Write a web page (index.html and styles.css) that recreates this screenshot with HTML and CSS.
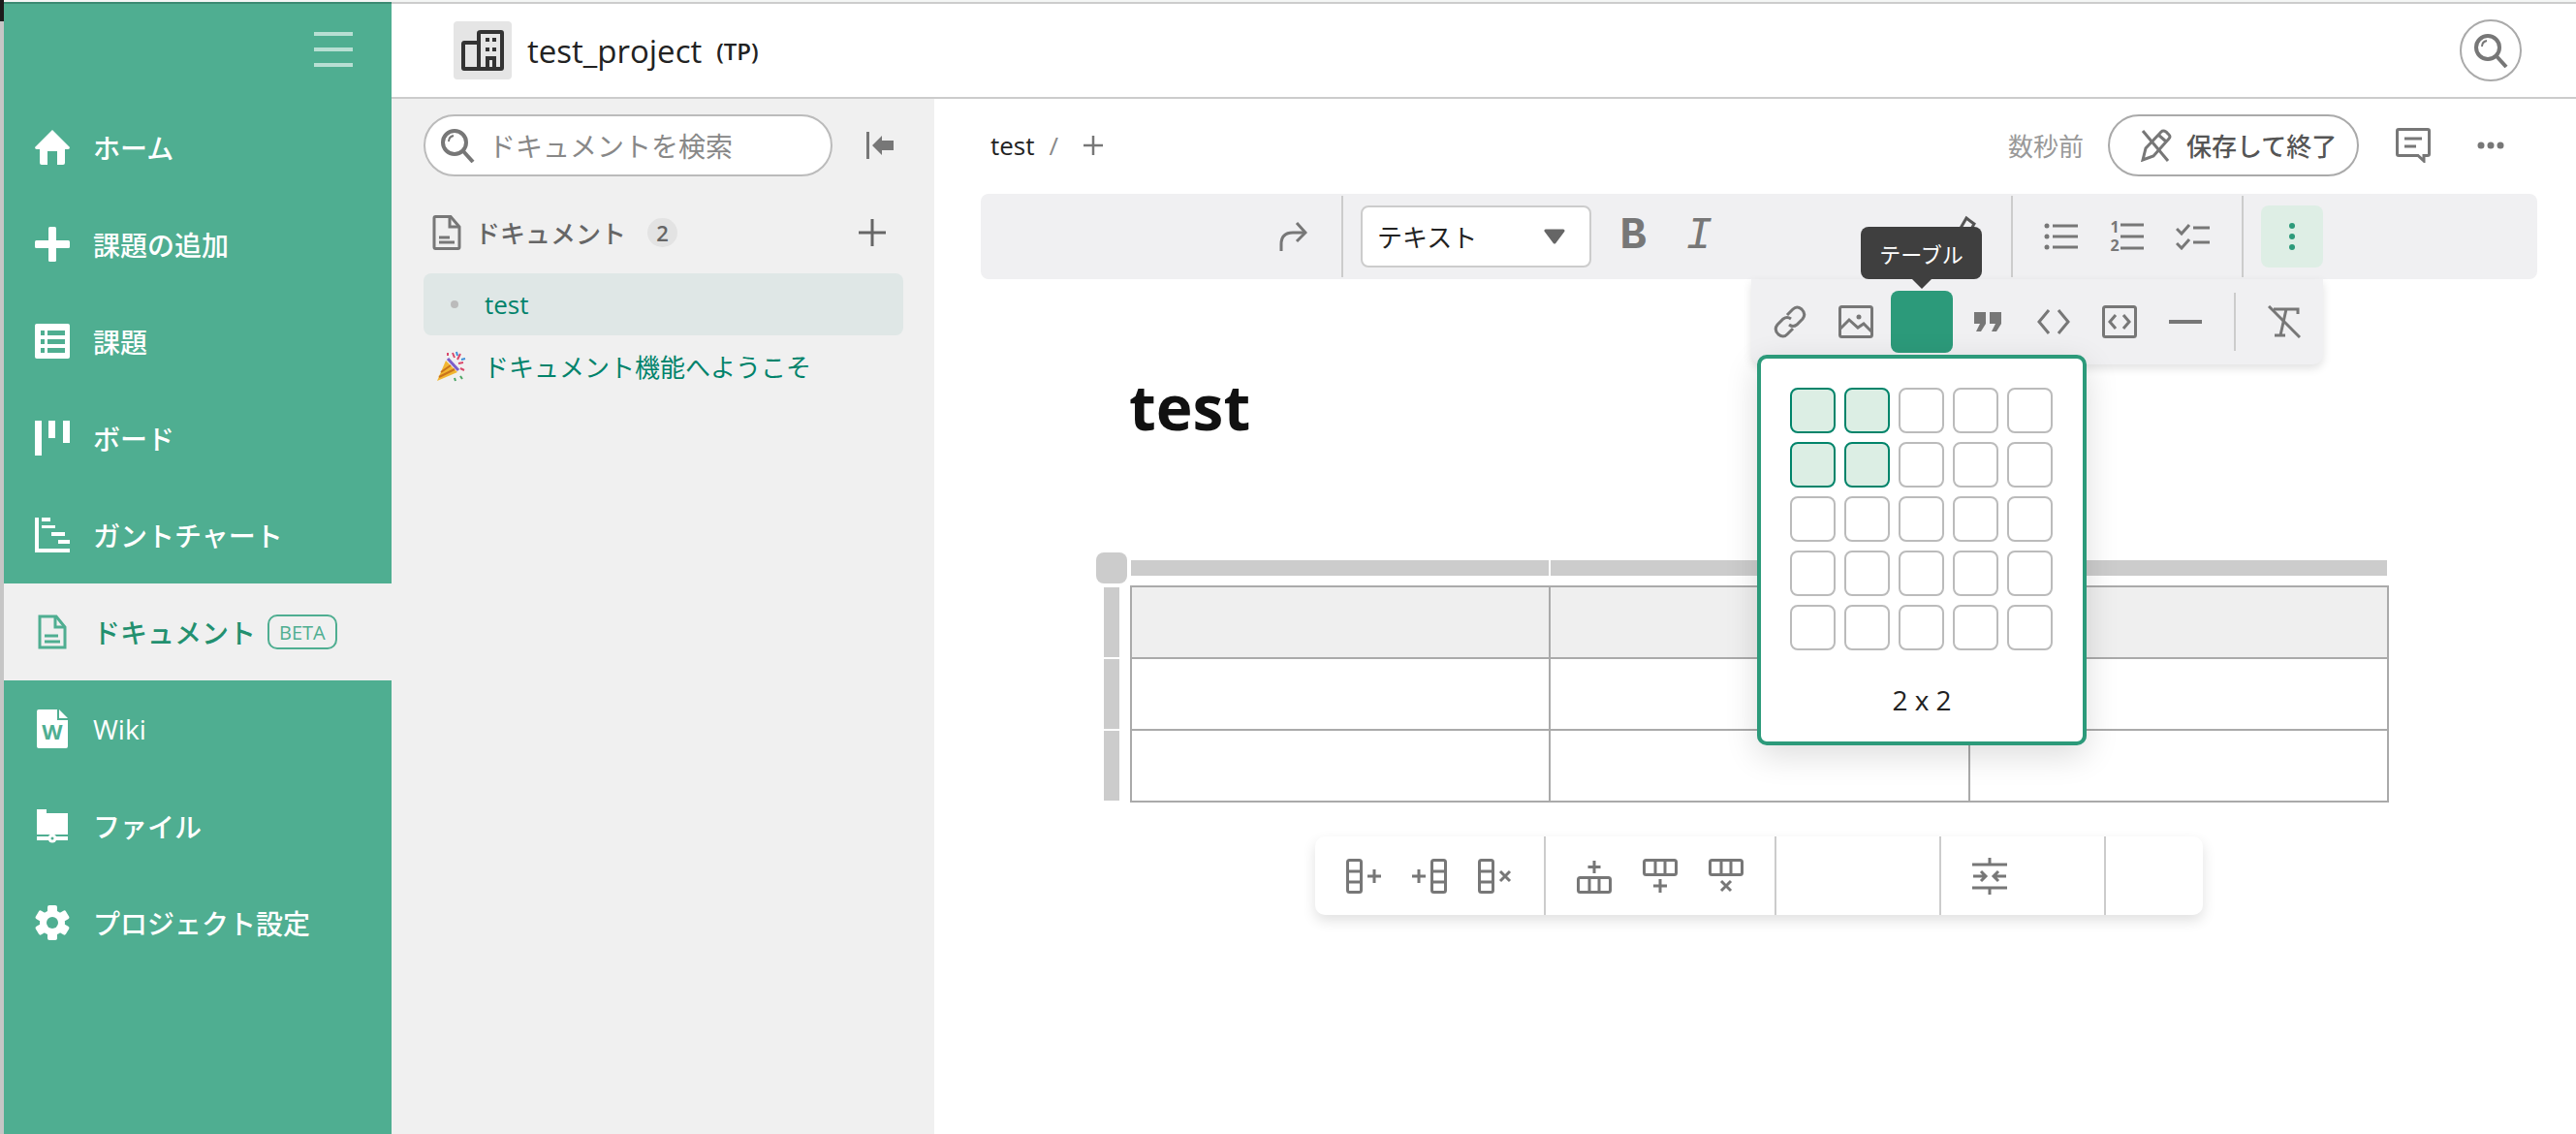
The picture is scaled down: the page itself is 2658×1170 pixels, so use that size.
FILE: index.html
```html
<!DOCTYPE html>
<html lang="ja">
<head>
    <meta charset="UTF-8">
    <title>test - ドキュメント</title>
    <link rel="stylesheet" href="styles.css">
</head>
<body>
    <div class="corner"></div>

    <aside class="sidebar">
        <div class="sidebar-top">
            <div class="hamburger"><span></span><span></span><span></span></div>
        </div>
        <nav>
            <a class="nav-item">
                <svg class="nav-icon" viewBox="0 0 36 36"><path d="M18 0L36 18Q36 20 34 20H31V34Q31 36 29 36H23V22H13V36H7Q5 36 5 34V20H2Q0 20 0 18Z"/></svg>
                ホーム
            </a>
            <a class="nav-item">
                <svg class="nav-icon" viewBox="0 0 36 36"><rect x="14" width="8" height="36" rx="1.5"/><rect y="14" width="36" height="8" rx="1.5"/></svg>
                課題の追加
            </a>
            <a class="nav-item">
                <svg class="nav-icon" viewBox="0 0 36 36">
                    <rect width="36" height="36" rx="2"/>
                    <g class="cut"><rect x="6" y="7" width="4" height="5"/><rect x="13" y="7" width="18" height="5"/><rect x="6" y="16" width="4" height="5"/><rect x="13" y="16" width="18" height="5"/><rect x="6" y="25" width="4" height="5"/><rect x="13" y="25" width="18" height="5"/></g>
                </svg>
                課題
            </a>
            <a class="nav-item">
                <svg class="nav-icon" viewBox="0 0 36 36"><rect width="7" height="36"/><rect x="14" width="7" height="18"/><rect x="29" width="7" height="23"/></svg>
                ボード
            </a>
            <a class="nav-item">
                <svg class="nav-icon" viewBox="0 0 36 36"><path d="M0 0H4V32H36V36H0Z"/><rect x="7" width="9" height="4"/><rect x="7" y="8" width="14" height="3"/><rect x="17" y="15" width="14" height="4"/><rect x="24" y="23" width="12" height="4"/></svg>
                ガントチャート
            </a>
            <a class="nav-item active">
                <svg class="nav-icon" viewBox="0 0 36 36"><path class="doc-line" d="M5 2H22L31 13V34H5Z"/><path class="doc-line" d="M21 3V13H30"/><path class="doc-line" d="M10 22H24M10 28H26"/></svg>
                ドキュメント
                <span class="beta">BETA</span>
            </a>
            <a class="nav-item">
                <svg class="nav-icon tall" viewBox="0 0 32 40"><path d="M2 0H21V11H32V38Q32 40 30 40H2Q0 40 0 38V2Q0 0 2 0ZM23 0L32 9H23Z"/><text class="wiki-w" x="16" y="31" text-anchor="middle">W</text></svg>
                Wiki
            </a>
            <a class="nav-item">
                <svg class="nav-icon" viewBox="0 0 36 36"><path d="M2 1H12V5H34V27H2Z"/><rect x="16" y="27" width="4" height="4"/><rect x="2" y="29" width="12" height="4"/><rect x="22" y="29" width="12" height="4"/><circle cx="18" cy="31" r="4.500"/><circle class="cut" cx="18" cy="31" r="1.500"/></svg>
                ファイル
            </a>
            <a class="nav-item">
                <svg class="nav-icon" viewBox="0 0 36 36">
                    <g>
                        <rect x="13" y="0" width="10" height="36" rx="2"/>
                        <rect x="13" y="0" width="10" height="36" rx="2" transform="rotate(60 18 18)"/>
                        <rect x="13" y="0" width="10" height="36" rx="2" transform="rotate(120 18 18)"/>
                        <circle cx="18" cy="18" r="13"/>
                    </g>
                    <circle class="cut" cx="18" cy="18" r="6"/>
                </svg>
                プロジェクト設定
            </a>
        </nav>
    </aside>

    <div class="content">
        <header class="header">
            <div class="project-icon">
                <svg width="44" height="42" viewBox="0 0 44 42" class="ink-dark">
                    <path d="M18 13H3Q2 13 2 14.500V39Q2 40 3 40H41Q42 40 42 39V3Q42 2 41 2H20Q18 2 18 3V40"/>
                    <path d="M27 40V29H34V40"/>
                    <path class="fat" d="M25 10H29M32 10H36M25 20H29M32 20H36"/>
                </svg>
            </div>
            <span class="project-name">test_project</span>
            <span class="project-key">(TP)</span>
            <button class="circle-search">
                <svg width="36" height="36" viewBox="0 0 36 36" class="ink lens"><circle cx="15" cy="15" r="12"/><path d="M24 24L34 35"/><path class="thin" d="M9 14Q9 9 14 8"/></svg>
            </button>
        </header>

        <div class="workspace">
            <section class="doc-panel">
                <div class="search-row">
                    <div class="search-box">
                        <svg width="36" height="36" viewBox="0 0 36 36" class="ink lens"><circle cx="15" cy="15" r="12"/><path d="M24 24L34 35"/><path class="thin" d="M9 14Q9 9 14 8"/></svg>
                        <span>ドキュメントを検索</span>
                    </div>
                    <svg class="collapse" width="28" height="28" viewBox="0 0 28 28"><rect width="3" height="28" fill="#777"/><path d="M6 14L16 4V9H28V19H16V24Z" fill="#777"/></svg>
                </div>
                <div class="panel-heading">
                    <svg width="30" height="36" viewBox="0 0 30 36" class="ink"><path d="M2 3Q2 1.500 3.500 1.500H19L28 12V33Q28 34.500 26.500 34.500H3.500Q2 34.500 2 33Z"/><path d="M18 2V12H28"/><path d="M7 23H18M7 28H23"/></svg>
                    <span class="panel-title">ドキュメント</span>
                    <span class="count">2</span>
                    <svg class="panel-add" width="28" height="28" viewBox="0 0 28 28"><path d="M14 0V28M0 14H28" stroke="#666" stroke-width="3" fill="none"/></svg>
                </div>
                <ul class="doc-list">
                    <li class="doc-row selected"><i class="dot"></i>test</li>
                    <li class="doc-row">
                        <svg class="popper" width="32" height="32" viewBox="0 0 32 32">
                            <path d="M2 31L11 10L23 22Z" fill="#f2b632"/>
                            <path d="M6 22L16 15M4 27L20 19" stroke="#c9731d" stroke-width="2"/>
                            <path d="M13 8L24 20" stroke="#7c5fc9" stroke-width="3"/>
                            <path d="M18 2L20 7M26 3L23 9M29 12L24 13M30 20L26 18M13 2V5" stroke="#d9486b" stroke-width="2"/>
                            <path d="M22 1L23 5M31 8L27 9" stroke="#3d8fd9" stroke-width="2"/>
                            <path d="M26 26L28 29M20 28L21 31" stroke="#4aa564" stroke-width="2"/>
                        </svg>
                        ドキュメント機能へようこそ
                    </li>
                </ul>
            </section>

            <main class="main">
                <div class="doc-top">
                    <span class="crumb">test</span>
                    <span class="crumb-sep">/</span>
                    <svg class="crumb-add" width="20" height="20" viewBox="0 0 20 20"><path d="M10 0V20M0 10H20" stroke="#777" stroke-width="2.500"/></svg>
                    <span class="saved-at">数秒前</span>
                    <button class="save-btn">
                        <svg width="34" height="34" viewBox="0 0 34 34" class="ink"><path d="M4 32L7 20L23 3Q25 1 28 3L31 6Q33 8 31 10L15 28Z"/><path d="M20 6L28 13"/><path d="M4 2L30 33"/></svg>
                        保存して終了
                    </button>
                    <span class="tool">
                        <svg width="36" height="36" viewBox="0 0 36 36" class="ink"><path d="M1.500 3Q1.500 1.500 3 1.500H33Q34.500 1.500 34.500 3V27Q34.500 28.500 33 28.500H29V34L23 28.500H3Q1.500 28.500 1.500 27Z"/><path d="M9 11H27M9 19H21"/></svg>
                    </span>
                    <span class="tool more">
                        <svg width="28" height="8" viewBox="0 0 28 8"><circle cx="4" cy="4" r="3.500" fill="#777"/><circle cx="14" cy="4" r="3.500" fill="#777"/><circle cx="24" cy="4" r="3.500" fill="#777"/></svg>
                    </span>
                </div>

                <div class="toolbar">
                    <span class="tool"></span><span class="tool"></span><span class="tool"></span><span class="tool"></span>
                    <span class="tool">
                        <svg width="30" height="32" viewBox="0 0 30 32" class="ink"><path d="M3 31V24Q3 12 15 12H27"/><path d="M19 2L28 12L19 21"/></svg>
                    </span>
                    <i class="sep"></i>
                    <div class="select">テキスト<svg width="24" height="16" viewBox="0 0 24 16"><path d="M3 2H21L12 14Z" fill="#666" stroke="#666" stroke-width="3" stroke-linejoin="round"/></svg></div>
                    <span class="tool glyph-b">B</span>
                    <span class="tool glyph-i">I</span>
                    <span class="tool"></span><span class="tool"></span><span class="tool"></span>
                    <span class="tool">
                        <svg class="pen" width="36" height="44" viewBox="0 0 36 44"><path d="M22 3L30 9L18 30H11L11 22Z" fill="none" stroke="#555" stroke-width="3"/><rect x="0" y="35" width="36" height="6" fill="#222"/></svg>
                    </span>
                    <i class="sep"></i>
                    <span class="tool">
                        <svg width="36" height="30" viewBox="0 0 36 30" class="ink"><path d="M9 4H35M9 15H35M9 26H35"/><g class="solid"><circle cx="3" cy="4" r="2.500"/><circle cx="3" cy="15" r="2.500"/><circle cx="3" cy="26" r="2.500"/></g></svg>
                    </span>
                    <span class="tool">
                        <svg width="36" height="44" viewBox="0 -6 36 44" class="ink"><path d="M11 4H35M11 16H35M11 28H35"/><text class="num" x="5" y="12" text-anchor="middle">1</text><text class="num" x="5" y="31" text-anchor="middle">2</text></svg>
                    </span>
                    <span class="tool">
                        <svg width="36" height="28" viewBox="0 0 36 28" class="ink"><path d="M1 6L6 11L14 2M1 21L6 26L14 17"/><path d="M18 5H35M18 20H35"/></svg>
                    </span>
                    <i class="sep"></i>
                    <span class="tool on">
                        <svg width="8" height="30" viewBox="0 0 8 30"><circle cx="4" cy="4" r="3" fill="#2c9a7a"/><circle cx="4" cy="15" r="3" fill="#2c9a7a"/><circle cx="4" cy="26" r="3" fill="#2c9a7a"/></svg>
                    </span>
                </div>

                <article class="doc-body">
                    <h1 class="doc-title">test</h1>
                    <div class="table-wrap">
                        <div class="grip-corner"></div>
                        <div class="grip-cols"><span></span><span></span><span></span></div>
                        <div class="grip-rows"><span></span><span></span><span></span></div>
                        <table class="doc-table">
                            <tr><th></th><th></th><th></th></tr>
                            <tr><td></td><td></td><td></td></tr>
                            <tr><td></td><td></td><td></td></tr>
                        </table>
                    </div>

                    <div class="table-tools">
                        <span class="tool"><svg width="36" height="36" viewBox="0 0 36 36" class="ink"><rect x="1.500" y="1.500" width="14" height="33" rx="2"/><path d="M2 13H15M2 24H15"/><path d="M22 18H36M29 11V25"/></svg></span>
                        <span class="tool"><svg width="36" height="36" viewBox="0 0 36 36" class="ink"><rect x="20.500" y="1.500" width="14" height="33" rx="2"/><path d="M21 13H34M21 24H34"/><path d="M0 18H14M7 11V25"/></svg></span>
                        <span class="tool"><svg width="36" height="36" viewBox="0 0 36 36" class="ink"><rect x="1.500" y="1.500" width="14" height="33" rx="2"/><path d="M2 13H15M2 24H15"/><path d="M23 13L33 23M33 13L23 23"/></svg></span>
                        <i class="sep"></i>
                        <span class="tool"><svg width="36" height="36" viewBox="0 0 36 36" class="ink"><rect x="1.500" y="19.500" width="33" height="15" rx="2"/><path d="M13 20V34M23 20V34"/><path d="M18 2V15M11.500 8.500H24.500"/></svg></span>
                        <span class="tool"><svg width="36" height="36" viewBox="0 0 36 36" class="ink"><rect x="1.500" y="1.500" width="33" height="15" rx="2"/><path d="M13 2V16M23 2V16"/><path d="M18 21V35M11 28H25"/></svg></span>
                        <span class="tool"><svg width="36" height="36" viewBox="0 0 36 36" class="ink"><rect x="1.500" y="1.500" width="33" height="15" rx="2"/><path d="M13 2V16M23 2V16"/><path d="M13 23L23 33M23 23L13 33"/></svg></span>
                        <i class="sep"></i>
                        <span class="tool"></span><span class="tool"></span>
                        <i class="sep"></i>
                        <span class="tool"><svg width="36" height="38" viewBox="0 0 36 38" class="ink"><path d="M0 7H36M18 0V7M0 31H36M18 31V38"/><path d="M1 19H14M9 14L14 19L9 24M35 19H22M27 14L22 19L27 24"/></svg></span>
                        <span class="tool"></span>
                        <i class="sep"></i>
                    </div>
                </article>

                <div class="tooltip">テーブル</div>

                <div class="format-bar">
                    <span class="tool">
                        <svg width="34" height="34" viewBox="0 0 34 34" class="ink"><path d="M14 10L20 4Q24 0 29 4Q34 9 30 14L24 20Q20 23 16 20"/><path d="M20 24L14 30Q10 34 5 30Q0 25 4 20L10 14Q14 11 18 14"/></svg>
                    </span>
                    <span class="tool">
                        <svg width="36" height="34" viewBox="0 0 36 34" class="ink"><rect x="1.500" y="1.500" width="33" height="31" rx="2"/><path d="M2 24L11 15L20 23L26 19L34 27"/><circle class="solid" cx="21" cy="12" r="2.500"/></svg>
                    </span>
                    <span class="tool filled"></span>
                    <span class="tool">
                        <svg width="30" height="22" viewBox="0 0 30 22"><path d="M1 1H13V13L8 21H3L7 13H1ZM17 1H29V13L24 21H19L23 13H17Z" fill="#777"/></svg>
                    </span>
                    <span class="tool">
                        <svg width="34" height="28" viewBox="0 0 34 28" class="ink"><path d="M12 2L2 14L12 26M22 2L32 14L22 26"/></svg>
                    </span>
                    <span class="tool">
                        <svg width="36" height="34" viewBox="0 0 36 34" class="ink"><rect x="1.500" y="1.500" width="33" height="31" rx="2"/><path d="M14 10L8 17L14 24M22 10L28 17L22 24"/></svg>
                    </span>
                    <span class="tool">
                        <svg width="36" height="6" viewBox="0 0 36 6" class="ink"><path class="fat" d="M1 3H35"/></svg>
                    </span>
                    <i class="sep"></i>
                    <span class="tool">
                        <svg width="34" height="34" viewBox="0 0 34 34" class="ink"><path d="M1 1L33 33"/><path d="M6 4H31V9M19 4L13 31M7 31H18"/></svg>
                    </span>
                </div>

                <div class="table-picker">
                    <div class="picker-grid">
                        <span class="cell hit"></span><span class="cell hit"></span><span class="cell"></span><span class="cell"></span><span class="cell"></span>
                        <span class="cell hit"></span><span class="cell hit"></span><span class="cell"></span><span class="cell"></span><span class="cell"></span>
                        <span class="cell"></span><span class="cell"></span><span class="cell"></span><span class="cell"></span><span class="cell"></span>
                        <span class="cell"></span><span class="cell"></span><span class="cell"></span><span class="cell"></span><span class="cell"></span>
                        <span class="cell"></span><span class="cell"></span><span class="cell"></span><span class="cell"></span><span class="cell"></span>
                    </div>
                    <div class="picker-size">2 x 2</div>
                </div>
            </main>
        </div>
    </div>
</body>
</html>
```

FILE: styles.css
```css
* {
    box-sizing: border-box;
}
html, body {
    height: 100%;
}
body {
    margin: 0;
    padding-top: 2px;
    display: flex;
    overflow: hidden;
    background-color: #f4f6f5;
    color: #222;
    font-family: "Open Sans", "Noto Sans CJK JP", sans-serif;
    font-size: 26px;
}
ul {
    list-style: none;
    margin: 0;
    padding: 0;
}
button {
    font-family: inherit;
    background: none;
    padding: 0;
}
.corner {
    position: absolute;
    top: 0;
    left: 0;
    width: 4px;
    height: 22px;
    background-color: #1c1c1c;
}

/* icon ink */
.ink {
    fill: none;
    stroke: #777;
    stroke-width: 3;
}
.ink.lens {
    stroke-width: 4;
}
.ink .thin {
    stroke-width: 2;
}
.ink .fat {
    stroke-width: 4;
}
.ink .solid {
    fill: #777;
    stroke: none;
}
.ink .num {
    fill: #777;
    stroke: none;
    font: 700 16px "Open Sans", sans-serif;
}
.ink-dark {
    fill: none;
    stroke: #333;
    stroke-width: 4;
}
.ink-dark .fat {
    stroke-width: 4;
}

/* sidebar */
.sidebar {
    width: 404px;
    flex-shrink: 0;
    border-top: 2px solid #3b8a72;
    border-left: 4px solid #c6c6c6;
    background-color: #4fae91;
    color: #fff;
}
.sidebar-top {
    height: 98px;
    padding: 29px 40px 0 0;
}
.hamburger {
    width: 40px;
    margin-left: auto;
    display: flex;
    flex-direction: column;
    gap: 12px;
}
.hamburger span {
    height: 4px;
    background-color: rgba(255, 255, 255, 0.6);
}
.nav-item {
    height: 100px;
    padding-left: 32px;
    display: flex;
    align-items: center;
    gap: 24px;
    font-size: 28px;
    font-weight: 500;
}
.nav-icon {
    width: 36px;
    height: 36px;
    flex-shrink: 0;
    fill: #fff;
}
.nav-icon.tall {
    height: 40px;
}
.nav-icon .cut {
    fill: #4fae91;
}
.wiki-w {
    fill: #4fae91;
    font: 700 22px "Open Sans", sans-serif;
}
.nav-item.active {
    background-color: #f0f0f0;
    color: #23906f;
}
.doc-line {
    fill: none;
    stroke: #4fae91;
    stroke-width: 3;
}
.beta {
    height: 36px;
    padding: 0 10px;
    margin-left: -12px;
    display: flex;
    align-items: center;
    border: 2px solid #4fae91;
    border-radius: 10px;
    color: #4fae91;
    font-size: 20px;
    font-weight: 400;
}

/* header */
.content {
    flex: 1;
    display: flex;
    flex-direction: column;
    min-width: 0;
}
.header {
    height: 100px;
    padding: 0 56px 0 64px;
    display: flex;
    align-items: center;
    background-color: #fff;
    border-top: 2px solid #ccc;
    border-bottom: 2px solid #ccc;
}
.project-icon {
    width: 60px;
    height: 60px;
    margin-right: 16px;
    display: flex;
    align-items: center;
    justify-content: center;
    background-color: #e5e5e5;
    border-radius: 4px;
}
.project-name {
    font-size: 33px;
    font-weight: 500;
    color: #222;
}
.project-key {
    margin-left: 15px;
    font-size: 24px;
    font-weight: 600;
    color: #222;
}
.circle-search {
    width: 64px;
    height: 64px;
    margin-left: auto;
    display: flex;
    align-items: center;
    justify-content: center;
    border: 2px solid #aaa;
    border-radius: 50%;
}

/* document list */
.workspace {
    flex: 1;
    display: flex;
    min-height: 0;
}
.doc-panel {
    width: 560px;
    flex-shrink: 0;
    padding: 16px 32px 0 33px;
    background-color: #f0f0f0;
}
.search-row {
    display: flex;
    align-items: center;
    gap: 35px;
}
.search-box {
    width: 422px;
    height: 64px;
    padding-left: 15px;
    display: flex;
    align-items: center;
    gap: 14px;
    background-color: #fff;
    border: 2px solid #bbb;
    border-radius: 32px;
    font-size: 28px;
    color: #888;
}
.panel-heading {
    height: 44px;
    margin-top: 36px;
    padding: 0 18px 0 9px;
    display: flex;
    align-items: center;
}
.panel-title {
    margin-left: 14px;
    font-weight: 500;
    color: #666;
}
.count {
    width: 31px;
    height: 30px;
    margin-left: 22px;
    text-align: center;
    line-height: 30px;
    font-size: 22px;
    font-weight: 600;
    background-color: #e3e3e3;
    border-radius: 15px;
    color: #666;
}
.panel-add {
    margin-left: auto;
}
.doc-list {
    margin-top: 20px;
}
.doc-row {
    height: 64px;
    padding-left: 12px;
    display: flex;
    align-items: center;
    font-weight: 400;
    color: #00836b;
    border-radius: 8px;
}
.doc-row.selected {
    padding-left: 28px;
    background-color: #dfe7e6;
    font-weight: 500;
}
.dot {
    width: 8px;
    height: 8px;
    margin-right: 27px;
    border-radius: 50%;
    background-color: #bbb;
}
.popper {
    margin-right: 18px;
}

/* document */
.main {
    position: relative;
    flex: 1;
    padding: 16px 40px 0 48px;
    background-color: #fff;
}
.doc-top {
    height: 64px;
    padding-left: 10px;
    display: flex;
    align-items: center;
}
.crumb-sep {
    margin-left: 15px;
    color: #888;
}
.crumb-add {
    margin-left: 26px;
}
.saved-at {
    margin-left: auto;
    margin-right: 25px;
    color: #999;
}
.save-btn {
    width: 259px;
    height: 64px;
    margin-right: 22px;
    padding-left: 30px;
    display: flex;
    align-items: center;
    gap: 15px;
    border: 2px solid #aaa;
    border-radius: 32px;
    font-size: 26px;
    font-weight: 500;
    color: #555;
}
.tool {
    width: 64px;
    height: 64px;
    margin: 0 2px;
    flex-shrink: 0;
    display: flex;
    align-items: center;
    justify-content: center;
    border-radius: 8px;
}
.tool.more {
    margin-left: 14px;
    margin-right: 16px;
}
.tool.on {
    background-color: #deeee5;
}
.tool.filled {
    background-color: #2c9a7a;
}
.sep {
    width: 2px;
    align-self: stretch;
    margin: 2px 16px;
    background-color: #ccc;
    flex-shrink: 0;
}
.toolbar {
    height: 88px;
    margin-top: 18px;
    padding-left: 16px;
    display: flex;
    align-items: center;
    background-color: #f0f0f2;
    border-radius: 8px;
}
.select {
    width: 238px;
    height: 64px;
    margin: 0 9px 0 2px;
    padding: 0 24px 0 15px;
    display: flex;
    align-items: center;
    justify-content: space-between;
    background-color: #fff;
    border: 2px solid #ccc;
    border-radius: 8px;
}
.glyph-b, .glyph-i {
    font-family: "Liberation Mono", monospace;
    font-size: 46px;
    color: #777;
    font-weight: 700;
}
.glyph-i {
    font-style: italic;
    font-weight: 400;
}
.doc-body {
    padding-left: 119px;
}
.doc-title {
    margin: 88px 0 0 34px;
    font-size: 64px;
    line-height: 88px;
    font-weight: 700;
    color: #111;
}
.table-wrap {
    margin-top: 106px;
    display: grid;
    grid-template-columns: 35px 1299px;
    grid-template-rows: 34px auto;
}
.grip-corner {
    width: 32px;
    height: 32px;
    background-color: #ccc;
    border-radius: 8px;
}
.grip-cols {
    height: 16px;
    margin: 8px 2px 0 1px;
    display: flex;
    gap: 2px;
}
.grip-cols span {
    flex: 1;
    background-color: #ccc;
}
.grip-rows {
    width: 16px;
    margin: 2px 0 2px 8px;
    display: flex;
    flex-direction: column;
    gap: 2px;
}
.grip-rows span {
    flex: 1;
    background-color: #ccc;
}
.doc-table {
    width: 1299px;
    table-layout: fixed;
    border-collapse: collapse;
}
.doc-table th, .doc-table td {
    height: 74px;
    padding: 0;
    border: 2px solid #aaa;
}
.doc-table th {
    background-color: #efefef;
}
.table-tools {
    width: 916px;
    height: 81px;
    margin: 35px 0 0 226px;
    padding-left: 16px;
    display: flex;
    align-items: center;
    background-color: #fff;
    border-radius: 10px;
    box-shadow: 0 6px 14px rgba(0, 0, 0, 0.12);
}
.table-tools .sep {
    margin-top: 0;
    margin-bottom: 0;
}

/* floating over the document */
.tooltip {
    position: absolute;
    left: 956px;
    top: 132px;
    width: 125px;
    height: 54px;
    display: flex;
    align-items: center;
    justify-content: center;
    background-color: #3f3f3f;
    border-radius: 8px;
    color: #fff;
    font-size: 22px;
    z-index: 3;
}
.tooltip::after {
    content: "";
    position: absolute;
    left: 53px;
    top: 54px;
    border-top: 10px solid #3f3f3f;
    border-left: 10px solid transparent;
    border-right: 10px solid transparent;
}
.format-bar {
    position: absolute;
    left: 843px;
    top: 186px;
    width: 590px;
    height: 88px;
    padding: 12px 0 12px 6px;
    display: flex;
    align-items: center;
    background-color: #f0f0f2;
    border-radius: 0 0 10px 10px;
    box-shadow: 0 4px 10px rgba(0, 0, 0, 0.12);
    z-index: 1;
}
.table-picker {
    position: absolute;
    left: 849px;
    top: 264px;
    width: 340px;
    height: 403px;
    padding: 30px 30px 0;
    background-color: #fff;
    border: 4px solid #2c9a7a;
    border-radius: 10px;
    box-shadow: 0 10px 34px rgba(0, 0, 0, 0.14);
    z-index: 2;
}
.picker-grid {
    display: grid;
    grid-template-columns: repeat(5, 47px);
    grid-auto-rows: 47px;
    gap: 9px;
}
.cell {
    border: 2px solid #bbb;
    border-radius: 8px;
}
.cell.hit {
    background-color: #dceee4;
    border-color: #00846a;
}
.picker-size {
    margin-top: 32px;
    text-align: center;
    line-height: 38px;
    font-size: 28px;
    color: #222;
}
```
